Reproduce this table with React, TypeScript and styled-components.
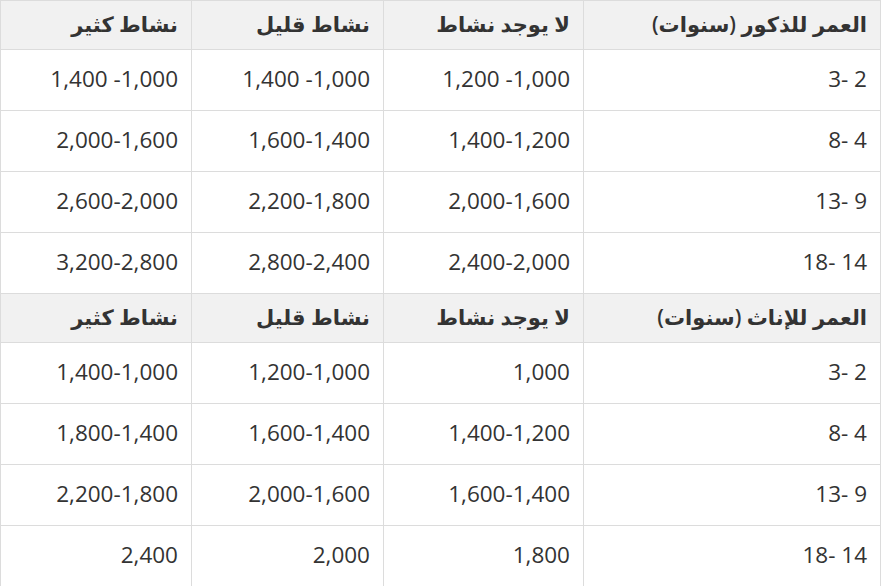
import React from 'react';
import styled, { createGlobalStyle } from 'styled-components';

const Global = createGlobalStyle`
  html, body {
    margin: 0;
    padding: 0;
    background: #fff;
  }
`;

const Table = styled.table`
  direction: rtl;
  border-collapse: collapse;
  width: 881px;
  table-layout: fixed;
  font-family: "Open Sans", "DejaVu Sans", sans-serif;
  color: #333;
`;

const Head = styled.th<{ $w?: number }>`
  width: ${p => (p.$w ? p.$w + 'px' : 'auto')};
  height: 49px;
  padding: 0 13px 2px;
  background: #f1f1f1;
  border: 1px solid #dcdcdc;
  text-align: right;
  font-size: 21px;
  font-weight: 600;
  white-space: nowrap;
  box-sizing: border-box;
`;

const Cell = styled.td`
  height: 61px;
  padding: 0 13px 3px;
  border: 1px solid #dcdcdc;
  text-align: right;
  font-size: 22.5px;
  white-space: nowrap;
  box-sizing: border-box;
`;

interface IGroup {
  title: string;
  rows: string[][];
}

// values are written in the order they show on screen
const groups: IGroup[] = [
  {
    title: 'العمر للذكور (سنوات)',
    rows: [
      ['3- 2', '1,200 -1,000', '1,400 -1,000', '1,400 -1,000'],
      ['8- 4', '1,400-1,200', '1,600-1,400', '2,000-1,600'],
      ['13- 9', '2,000-1,600', '2,200-1,800', '2,600-2,000'],
      ['18- 14', '2,400-2,000', '2,800-2,400', '3,200-2,800'],
    ],
  },
  {
    title: 'العمر للإناث (سنوات)',
    rows: [
      ['3- 2', '1,000', '1,200-1,000', '1,400-1,000'],
      ['8- 4', '1,400-1,200', '1,600-1,400', '1,800-1,400'],
      ['13- 9', '1,600-1,400', '2,000-1,600', '2,200-1,800'],
      ['18- 14', '1,800', '2,000', '2,400'],
    ],
  },
];

const Num = ({ v }: { v: string }) => <span dir="ltr">{v}</span>;

export default function App() {
  return (
    <>
      <Global />
      <Table>
        <tbody>
          {groups.map((g, gi) => (
            <React.Fragment key={gi}>
              <tr>
                <Head $w={gi === 0 ? 297 : undefined}>{g.title}</Head>
                <Head $w={gi === 0 ? 200 : undefined}>لا يوجد نشاط</Head>
                <Head $w={gi === 0 ? 192 : undefined}>نشاط قليل</Head>
                <Head>نشاط كثير</Head>
              </tr>
              {g.rows.map((r, ri) => (
                <tr key={ri}>
                  {r.map((c, ci) => (
                    <Cell key={ci}>
                      <Num v={c} />
                    </Cell>
                  ))}
                </tr>
              ))}
            </React.Fragment>
          ))}
        </tbody>
      </Table>
    </>
  );
}
